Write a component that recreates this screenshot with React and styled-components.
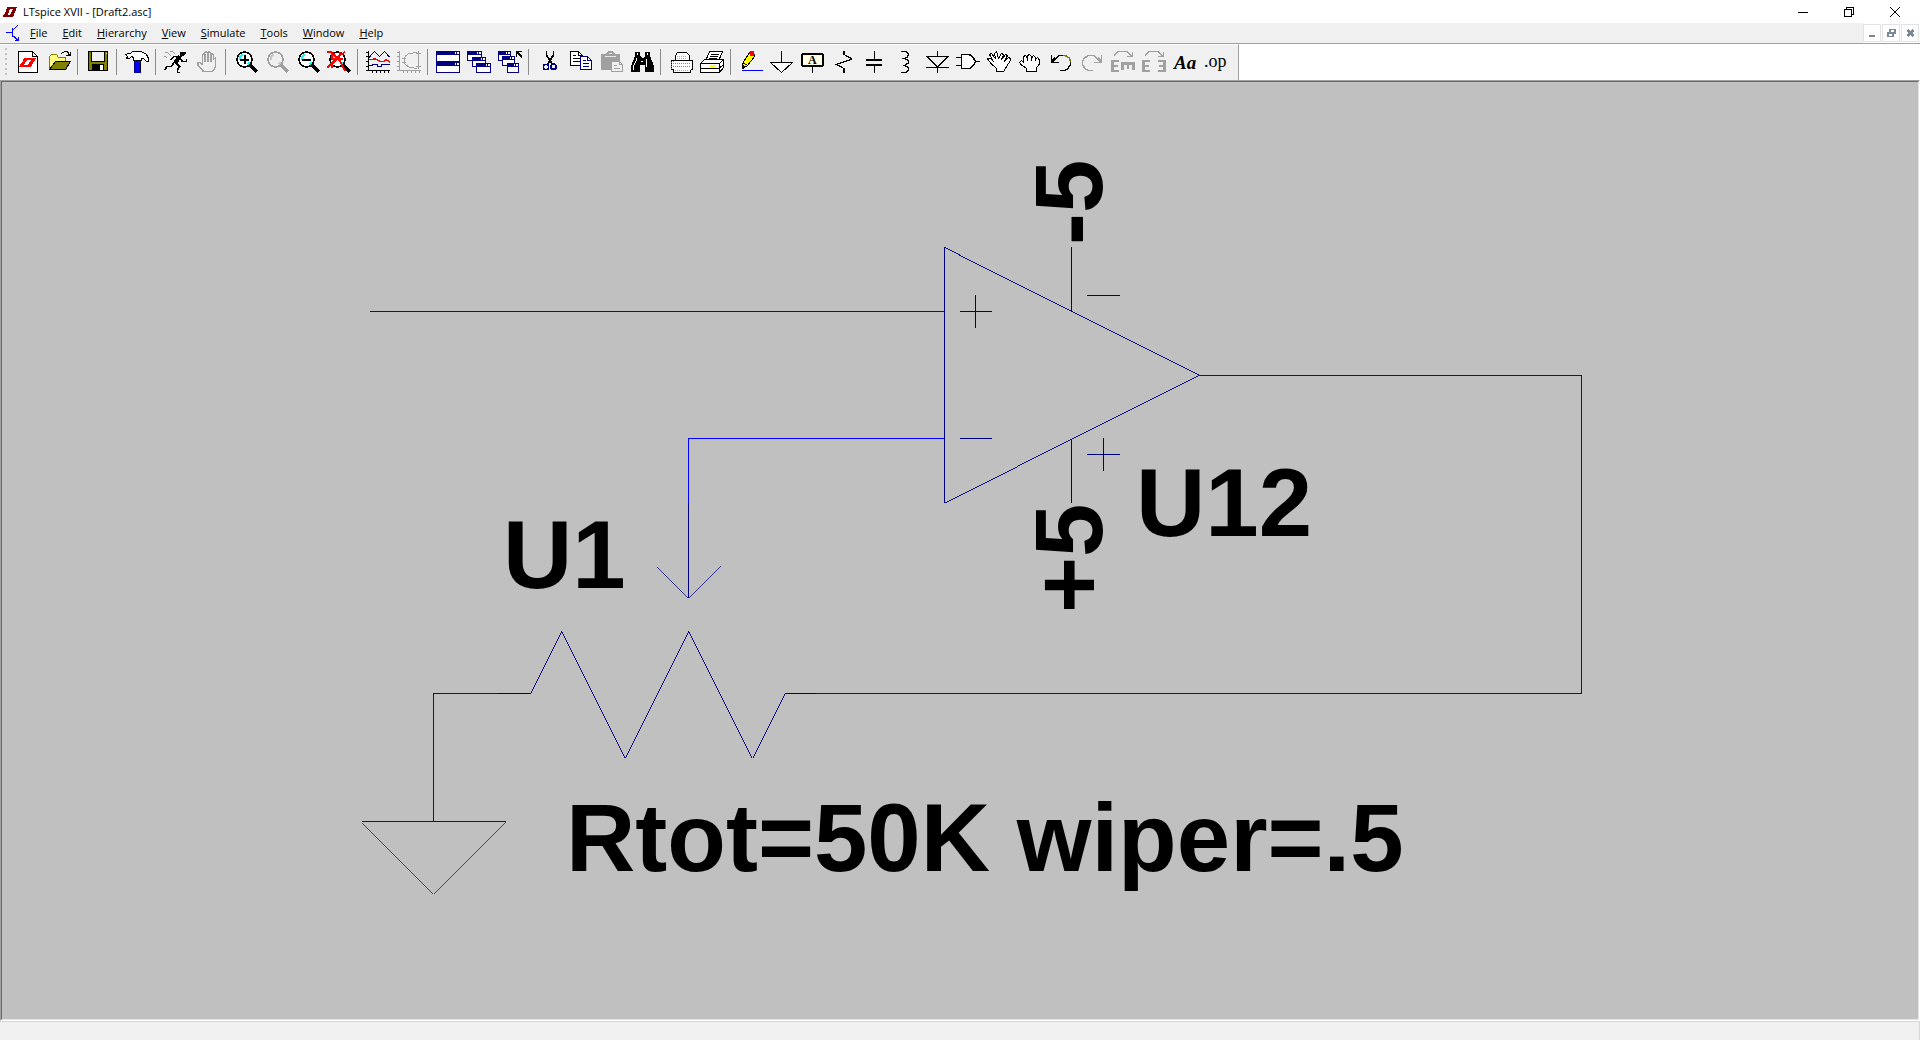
import React from "react";
import styled, { createGlobalStyle, css } from "styled-components";

const Global = createGlobalStyle`
  * { box-sizing: border-box; }
  html, body { margin: 0; padding: 0; }
  body { background: #fff; overflow: hidden; }
  button { font: inherit; color: inherit; border: 0; padding: 0; margin: 0; background: none; }
`;

const Window = styled.div`
  display: flex;
  flex-direction: column;
  height: 100vh;
  font-family: "Open Sans", "Noto Sans", sans-serif;
  font-size: 12px;
  line-height: 16px;
  color: #000;
`;

const TitleBar = styled.header`
  display: flex;
  align-items: center;
  height: 23px;
  padding: 0 2px 0 3px;
  background: #fff;
`;

const Title = styled.h1`
  flex: 1;
  margin: 0 0 0 6px;
  font-size: 11px;
  font-weight: 400;
  line-height: 16px;
`;

const CaptionButton = styled.button`
  display: flex;
  align-items: center;
  justify-content: center;
  width: 46px;
  height: 22px;
`;

const MenuBar = styled.nav`
  display: flex;
  align-items: center;
  height: 20px;
  padding-left: 6px;
  background: #f0f0f0;
`;

const MenuList = styled.div`
  display: flex;
  flex: 1;
  gap: 1px;
  margin-left: 4px;
`;

const MenuButton = styled.button`
  padding: 0 7px;
  font-size: 11px;
  line-height: 18px;

  &::first-letter {
    text-decoration: underline;
  }
`;

const ChildControls = styled.div`
  display: flex;
  gap: 1px;
  height: 20px;
  padding: 1px 1px 1px 0;
  background: #fff;
`;

const ChildButton = styled.button`
  display: flex;
  align-items: center;
  justify-content: center;
  width: 18px;
  height: 18px;
  border: 1px solid #e3e3e3;
  background: #fff;
`;

const ToolRow = styled.div`
  display: flex;
  height: 37px;
  border-top: 1px solid #a0a0a0;
  background: #fff;
`;

const ToolBar = styled.div`
  display: flex;
  align-items: center;
  padding: 0 7px 1px 5px;
  border-top: 1px solid #fff;
  border-right: 1px solid #a0a0a0;
  background: #f0f0f0;
`;

const Grip = styled.span`
  width: 2px;
  height: 28px;
  margin-right: 5px;
  background: repeating-linear-gradient(#c2c2c2 0 2px, #f0f0f0 2px 5px);
`;

const ToolButton = styled.button`
  display: flex;
  align-items: center;
  width: 31px;
  height: 30px;
`;

const Separator = styled.span`
  width: 8px;
  height: 26px;
  padding-left: 3px;

  &::before {
    content: "";
    display: block;
    width: 1px;
    height: 100%;
    background: #8c8c8c;
  }
`;

const pixelated = css`
  shape-rendering: crispEdges;
  fill: none;
  stroke: #000;
  stroke-width: 1px;
`;

const Glyph = styled.svg`
  ${pixelated}
  display: block;
  flex: none;
`;

const ToolText = styled.text`
  font-family: "Liberation Serif", serif;
  font-size: ${(p) => p.$size}px;
  font-style: ${(p) => (p.$italic ? "italic" : "normal")};
  font-weight: ${(p) => (p.$bold ? 700 : 400)};
  fill: #000;
  stroke: none;
`;

const Workspace = styled.main`
  flex: 1;
  min-height: 0;
  border: 1px solid #a0a0a0;
  border-right-color: #fff;
  border-bottom-color: #fff;
`;

const Sheet = styled.div`
  height: 100%;
  border: 1px solid #696969;
  border-right-color: #e3e3e3;
  border-bottom-color: #e3e3e3;
  background: #c0c0c0;
`;

const Schematic = styled.svg`
  ${pixelated}
  display: block;
  width: 100%;
  height: 100%;
`;

const Wire = styled.path`
  stroke: #0000ff;
`;

const Part = styled.path`
  stroke: #00007f;
`;

const NetText = styled.text`
  font-family: "Liberation Sans", Arial, sans-serif;
  font-size: 96px;
  font-weight: 700;
  fill: #000;
  stroke: none;
`;

const StatusBar = styled.footer`
  height: 19px;
  border-top: 1px solid #d7d7d7;
  border-right: 1px solid #d7d7d7;
  background: #f0f0f0;
`;

const GREY = "#a0a0a0";
const NAVY = "#000080";

const Lens = ({ color = "#000", glow = "#00ffff", children }) => (
  <>
    <circle cx="14.5" cy="9.5" r="7.5" fill={color === GREY ? "none" : "#fff"} stroke={color} strokeWidth="1.6" />
    <path d="M9.5 9.5V7.5L12.5 4.5M17.5 14.5L19.5 12.5" stroke={glow} strokeWidth="2" />
    <path d="M19.5 14.5L27 22" stroke={color} strokeWidth="3" />
    {children}
  </>
);

const Pane = ({ x, y, w = 14, h = 10 }) => (
  <>
    <rect x={x + 0.5} y={y + 0.5} width={w - 1} height={h - 1} fill="#fff" stroke={NAVY} />
    <path d={`M${x} ${y + 2}h${w}`} stroke={NAVY} strokeWidth="4" />
    <path d={`M${x + w - 5} ${y + 2}h1M${x + w - 3} ${y + 2}h2`} stroke="#fff" strokeWidth="2" />
  </>
);

const icons = {
  "New schematic": (
    <>
      <path d="M6.5 1.5H20.5L25.5 6.5V22.5H6.5Z" fill="#fff" />
      <path d="M20.5 1.5V6.5H25.5" />
      <path d="M12 8H24L19 17H7L9 13H10ZM15 10L12 15H16L19 10Z" fill="#f00" fillRule="evenodd" stroke="none" />
    </>
  ),
  Open: (
    <>
      <path d="M6.5 19V6.5L8.5 4.5H13.5L15.5 7.5H22.5V11" fill="#ffff80" stroke="#808000" />
      <path d="M6.5 19.5L12.5 11.5H27.5L22.5 19.5Z" fill="#808000" />
      <path d="M18.5 3.5L21.5 1.5H24.5L26.5 5M22.5 5.5H27.5V1.5M24.5 4.5H27" />
    </>
  ),
  Save: (
    <>
      <rect x="6.5" y="1.5" width="19" height="19" fill="#808000" />
      <path d="M9.5 2V11.5H22.5V2" fill="#f0f0f0" />
      <rect x="10" y="14" width="12" height="7" fill="#000" stroke="none" />
      <rect x="18" y="15" width="3" height="5" fill="#fff" stroke="none" />
      <path d="M23.5 3.5h1" stroke="#fff" />
    </>
  ),
  "Control panel": (
    <>
      <rect x="13" y="9" width="7" height="14" fill="#0000ff" stroke="none" />
      <path d="M13.5 11V22.5H19" stroke="#000080" />
      <path d="M4.5 4.5L7.5 3.5H9.5L11.5 1.5H20.5L25.5 4.5L27.5 8.5V11.5H25.5L22.5 8.5H20.5V10.5H12.5V7.5L10.5 6.5L8.5 8.5H5.5L6.5 6.5Z" fill="#fff" />
      <path d="M19.5 12V22" stroke="#000" />
    </>
  ),
  Run: (
    <>
      <path d="M4.5 2.5H7.5L11.5 6.5M9.5 1.5H12.5L15.5 4.5M4.5 6.5L7.5 7.5" stroke={GREY} />
      <path d="M21 2H25V4L22 6H20V3Z" fill="#000" />
      <path d="M20 6L15 13" strokeWidth="4" />
      <path d="M19 6.5H14L10.5 10M20 8L22.5 11.5H26.5V9M14 12L11.5 16.5H7L4.5 20M16 13L19.5 16.5L17.5 19.5V22.5H20" strokeWidth="1.7" />
    </>
  ),
  Halt: (
    <>
      <path d="M11.5 15V5.5L12.5 4L13.5 5.5V12V3.5L15 1.5L16.5 3.5V12V3L18 1.5L19.5 3.5V12V5L21 3.5L22.5 5.5V9L24.5 8V17L21.5 21.5H12.5L7 15.5V12.5H9L11.5 15.5" stroke={GREY} strokeWidth="1.5" />
      <path d="M14 3.5V12M17.5 3V12M20.5 4V12" stroke={GREY} />
    </>
  ),
  "Zoom in": <Lens><path d="M10 9.5H19M14.5 5V14" strokeWidth="2" /></Lens>,
  Pan: <Lens color={GREY} glow="#c8c8c8" />,
  "Zoom out": <Lens><path d="M10 9.5H19" strokeWidth="2" /></Lens>,
  "Zoom to fit": (
    <Lens>
      <path d="M4 2H8L12 6L17 11L22 21M22 2L16 6L11 11L4 18M9 3V9H20M17 2L16 7L9 14V18" stroke="#f00" strokeWidth="1.5" />
    </Lens>
  ),
  "Autorange plot": (
    <>
      <path d="M6.5 1V21M4 2.5H6M4 6.5H6M4 11.5H6M4 16.5H6M4 20.5H28M10.5 20V23M14.5 20V23M18.5 20V23M22.5 20V23M26.5 20V23" />
      <path d="M7 7.5L12.5 1.5L17.5 6.5L22.5 1.5L27.5 7M7 15.5H10V14.5H15V16.5H19V14.5H28" stroke={NAVY} />
      <path d="M7 9.5H11L13 8.5L18 11.5H22L24 9.5L28 12" stroke="#f00" strokeWidth="1.5" />
    </>
  ),
  "Pick plot": (
    <>
      <path d="M6.5 1V21M4 2.5H6M4 6.5H6M4 11.5H6M4 16.5H6M4 20.5H28M10.5 20V23M14.5 20V23M18.5 20V23M22.5 20V23M26.5 20V23" stroke={GREY} />
      <path d="M25.5 1V19M11 7V14M12 6.5L16 3.5L24 2.5M12 14.5L16 17L24 18.5M9 8.5H13M9 12.5H13M23 3.5H28M23 16.5H28" stroke={GREY} />
    </>
  ),
  "Tile windows": <><Pane x={4} y={1} w={24} h={11} /><Pane x={4} y={12} w={24} h={11} /></>,
  "Cascade windows": <><Pane x={4} y={1} w={15} /><Pane x={9} y={7} w={14} /><Pane x={13} y={13} w={15} /></>,
  "Close windows": (
    <>
      <Pane x={4} y={1} w={13} /><Pane x={8} y={6} w={13} /><Pane x={13} y={13} w={12} />
      <path d="M22.5 7V1.5H28M23 2L27.5 6.5V8" strokeWidth="1.5" />
    </>
  ),
  Cut: (
    <>
      <path d="M13.5 1V5L19 14M20.5 1V5L15 14" strokeWidth="1.8" />
      <circle cx="13" cy="17" r="2.7" stroke={NAVY} strokeWidth="1.6" />
      <circle cx="20.5" cy="16.5" r="2.7" stroke={NAVY} strokeWidth="1.6" />
    </>
  ),
  Copy: (
    <>
      <path d="M6.5 1.5H14.5L18.5 5.5V15.5H6.5Z" fill="#fff" />
      <path d="M14.5 1.5V5.5H18.5M9 5.5H12M9 8.5H16M9 11.5H16" />
      <path d="M16.5 6.5H23.5L27.5 10.5V19.5H16.5Z" fill="#fff" stroke={NAVY} />
      <path d="M23.5 6.5V10.5H27.5M19 10.5H22M19 13.5H25M19 16.5H25" stroke={NAVY} />
    </>
  ),
  Paste: (
    <>
      <path d="M6 4H11L13 1H18L20 4H25V20H6Z" fill={GREY} stroke="none" />
      <path d="M10 6.5H21M14 3.5H17" stroke="#e8e8e8" />
      <path d="M16.5 11.5H24.5L27.5 14.5V21.5H16.5Z" fill="#f0f0f0" stroke={GREY} />
      <path d="M24.5 12V14.5H27M19 15.5H22M19 18.5H25" stroke={GREY} />
    </>
  ),
  Find: (
    <>
      <path d="M9 2H14V6L16 8H17L19 6V2H24V6L28 16V22H19V15H14V22H5V16L9 6Z" fill="#000" stroke="none" />
      <path d="M11.5 3V5M21.5 3V5M10.5 8V10L7.5 16V20M20.5 9V17M15 11.5H17" stroke="#fff" />
    </>
  ),
  Print: (
    <>
      <path d="M10.5 11V5.5L12.5 2.5H21.5L24.5 5.5V11" fill="#fff" />
      <rect x="6.5" y="10.5" width="21" height="9" fill="#fff" />
      <path d="M6.5 19V13L9.5 10.5M8 16.5H26M8 13.5H26" stroke="#888" strokeDasharray="1 1" />
      <path d="M8 18.5V22.5H25.5V19.5" fill="#fff" />
      <path d="M12 6.5H22M12 8.5H22M10 20.5H24" stroke="#aaa" strokeDasharray="1 1" />
    </>
  ),
  "Print setup": (
    <>
      <path d="M9.5 11L13.5 1.5H26.5L22.5 11" fill="#fff" />
      <path d="M15 4.5H23M14 6.5H22M13 8.5H21" />
      <path d="M4.5 13.5L8.5 9.5H27.5V17.5L23.5 22.5H4.5Z" fill="#fff" />
      <path d="M4.5 13.5H23.5V22M23.5 13.5L27.5 9.5M5 18.5H23L27.5 14.5M24 20.5H25" />
      <path d="M14 16H19" stroke="#ffff00" strokeWidth="2" />
    </>
  ),
  Wire: (
    <>
      <path d="M7.5 18V13.5L14.5 2.5H17L19.5 5V6.5L12.5 15.5L8 18.5Z" fill="#ffff00" />
      <path d="M8 13L13 15.5" />
      <path d="M7 19V15L10 17Z" fill="#000" />
      <circle cx="17" cy="3.5" r="2.5" fill="#f00" stroke="none" />
      <path d="M7 20.5H28" stroke="#0000ff" />
    </>
  ),
  Ground: <><path d="M15.5 1V12" /><path d="M4.5 12.5H26.5L15.5 22.5Z" fill="#fff" /></>,
  "Label net": (
    <>
      <rect x="5" y="4" width="21" height="12" rx="1" fill="#ffffe1" strokeWidth="1.6" />
      <path d="M15.5 16V23" />
      <ToolText x="11" y="14" $size={12} $bold>A</ToolText>
    </>
  ),
  Resistor: <path d="M16 1V4.5L24 9L8.5 14.5L16 18.5V23" strokeWidth="1.2" />,
  Capacitor: <><path d="M15.5 1V9M15.5 15V23" /><path d="M7 10H23M7 15H23" strokeWidth="2" /></>,
  Inductor: <path d="M11 1.5H15.5L18.5 4L17.5 7L14 8.5L18.5 10.5V13L14.5 15.5L18.5 17.5V20L15.5 22.5H11" strokeWidth="1.4" />,
  Diode: <path d="M16.5 1V6M5 6.5H28M6.5 7L16.5 17L26.5 7M5 17.5H28M16.5 18V23" />,
  Component: (
    <>
      <path d="M9.5 4.5H17.5L21.5 8L23.5 11.5L21.5 15.5L17.5 18.5H9.5Z" fill="#fff" strokeWidth="1.5" />
      <path d="M4 7.5H9M4 15.5H9M24 11.5H28" strokeWidth="1.5" />
    </>
  ),
  Move: (
    <path d="M8.5 14L5.5 10.5L4.5 8.5H7.5L10.5 11.5L6.5 4.5L8.5 3.5L12.5 9L11.5 3.5L13.5 1.5L15.5 8.5L18.5 3.5L20.5 4.5L18.5 10L22.5 4.5L24.5 5.5L21.5 11.5L25.5 7.5L27.5 8.5V10.5L24.5 15L20.5 21.5H13.5V18.5Z" fill="#fff" />
  ),
  Drag: (
    <>
      <path d="M5.5 12.5L7.5 10.5L9.5 12.5V6.5L11.5 5.5L13.5 8V5.5L15.5 4.5L17.5 6.5V8L19.5 5.5L21.5 7.5V9L23.5 7.5L25.5 10V14L22.5 18V21.5H12.5V18.5L7.5 15Z" fill="#fff" />
      <path d="M13.5 7V11M17.5 7V11M21.5 8V11" />
    </>
  ),
  Undo: (
    <>
      <path d="M8 12L14 5.5H19" stroke="#000" strokeWidth="1.5" />
      <path d="M18 5.5H20L24.5 8L25.5 12" stroke="#808000" strokeWidth="1.5" />
      <path d="M25.5 12V15L22 19.5L19 20.5H15M6.5 5V12.5H14M7 11L10 8" strokeWidth="1.5" />
    </>
  ),
  Redo: <path d="M24 12L18 5.5H12L7.5 9L6.5 12V15L10 19.5L13 20.5H17M25.5 5V12.5H18M25 11L22 8" stroke={GREY} strokeWidth="1.5" />,
  Rotate: (
    <>
      <path d="M7 5.5L11 1.5H20L24.5 6M25.5 2V6.5H20" stroke={GREY} />
      <path d="M5.5 10V22M4 11H12M4 16H11M4 21H12" stroke={GREY} strokeWidth="2.6" />
      <path d="M14 13.5H28M15.5 13V20M21 13V19M26.5 13V20" stroke={GREY} strokeWidth="2.6" />
    </>
  ),
  Mirror: (
    <>
      <path d="M7 5.5L11 1.5H20L24.5 6M25.5 2V6.5H20" stroke={GREY} />
      <path d="M5.5 10V22M4 11H12M4 16H11M4 21H12M26.5 10V22M28 11H20M28 16H21M28 21H20" stroke={GREY} strokeWidth="2.6" />
    </>
  ),
  Text: <ToolText x="5" y="19" $size={19} $italic $bold>Aa</ToolText>,
  "SPICE directive": <ToolText x="4" y="17" $size={18}>.op</ToolText>,
};

const toolGroups = [
  ["New schematic", "Open"],
  ["Save"],
  ["Control panel"],
  ["Run", "Halt"],
  ["Zoom in", "Pan", "Zoom out", "Zoom to fit"],
  ["Autorange plot", "Pick plot"],
  ["Tile windows", "Cascade windows", "Close windows"],
  ["Cut", "Copy", "Paste", "Find"],
  ["Print", "Print setup"],
  ["Wire", "Ground", "Label net", "Resistor", "Capacitor", "Inductor", "Diode", "Component", "Move", "Drag", "Undo", "Redo", "Rotate", "Mirror", "Text", "SPICE directive"],
];

const disabledTools = new Set(["Halt", "Pan", "Pick plot", "Paste", "Redo", "Rotate", "Mirror"]);
const menus = ["File", "Edit", "Hierarchy", "View", "Simulate", "Tools", "Window", "Help"];

const captionGlyphs = {
  Minimize: <path d="M0 5.5H10" />,
  Restore: <path d="M.5 2.5H7.5V9.5H.5ZM2.5 2V.5H9.5V7.5H8" />,
  Close: <path d="M0 0L10 10M10 0L0 10" shapeRendering="auto" />,
};

const childGlyphs = {
  "Minimize drawing": <path d="M1 8H7" strokeWidth="2" />,
  "Restore drawing": <path d="M1 5H6V8.5H1ZM3 3.5V1.5H8V5.5H7" strokeWidth="1.4" />,
  "Close drawing": <path d="M1.5 2L7.5 8M7.5 2L1.5 8" strokeWidth="2.4" />,
};

function Drawing() {
  return (
    <Schematic role="img" aria-label="Op-amp and potentiometer circuit">
      <g transform="translate(-2 -82)">
        <Part d="M944.5 247V503M1071.5 247V311.5M1071.5 438.5V503M960 311.5H992M975.5 295V328M1087 295.5H1120M960 438.5H992M1087 454.5H1120M1103.5 438V471" />
        <Part d="M944.5 247.5L1199.5 375.5L944.5 502.5" strokeWidth="0.9" />
        <Part d="M498 693.5H530.5M784.5 693.5H816M688.5 503V598" />
        <Part d="M530.5 693.5L561.5 630.5L625.5 757.5L688.5 630.5L752.5 757.5L784.5 693.5" strokeWidth="0.9" />
        <Part d="M657.5 566.5L688.5 597.5L720.5 565.5" strokeWidth="0.72" />
        <Wire d="M370 311.5H944M944 438.5H688.5V503M1199 375.5H1581.5V693.5H816M498 693.5H433.5V821M362 821.5H506" />
        <Wire d="M362.5 822.5L433.5 893.5L505.5 821.5" strokeWidth="0.72" />
        <NetText x="503" y="588">U1</NetText>
        <NetText x="1136" y="536">U12</NetText>
        <NetText x="566" y="871">Rtot=50K wiper=.5</NetText>
        <NetText transform="translate(1102 245) rotate(-90)">-5</NetText>
        <NetText transform="translate(1102 613) rotate(-90)">+5</NetText>
      </g>
    </Schematic>
  );
}

export default function App() {
  return (
    <Window>
      <Global />
      <TitleBar>
        <Glyph width="14" height="12" aria-hidden="true">
          <path d="M4 1H14L10 11H0L1 8H2ZM7 3L5 9H7L10 3Z" fill="#800000" fillRule="evenodd" stroke="none" />
        </Glyph>
        <Title>LTspice XVII - [Draft2.asc]</Title>
        {Object.entries(captionGlyphs).map(([name, glyph]) => (
          <CaptionButton key={name} aria-label={name}>
            <Glyph width="10" height="10">{glyph}</Glyph>
          </CaptionButton>
        ))}
      </TitleBar>
      <MenuBar>
        <Glyph width="13" height="18" aria-hidden="true">
          <path d="M0 8.5H6M6.5 4V13M6.5 6.5L12 1M6.5 11.5L12 16M12.5 13V16.5H9" stroke="#0000ff" strokeWidth="1.2" />
        </Glyph>
        <MenuList>
          {menus.map((name) => <MenuButton key={name}>{name}</MenuButton>)}
        </MenuList>
        <ChildControls>
          {Object.entries(childGlyphs).map(([name, glyph]) => (
            <ChildButton key={name} aria-label={name}>
              <Glyph width="9" height="10"><g stroke="#7a8998">{glyph}</g></Glyph>
            </ChildButton>
          ))}
        </ChildControls>
      </MenuBar>
      <ToolRow>
        <ToolBar role="toolbar" aria-label="Schematic tools">
          <Grip />
          {toolGroups.map((group, index) => (
            <React.Fragment key={group[0]}>
              {index > 0 && <Separator />}
              {group.map((name) => (
                <ToolButton key={name} aria-label={name} disabled={disabledTools.has(name)}>
                  <Glyph width="31" height="24">{icons[name]}</Glyph>
                </ToolButton>
              ))}
            </React.Fragment>
          ))}
        </ToolBar>
      </ToolRow>
      <Workspace>
        <Sheet>
          <Drawing />
        </Sheet>
      </Workspace>
      <StatusBar />
    </Window>
  );
}
